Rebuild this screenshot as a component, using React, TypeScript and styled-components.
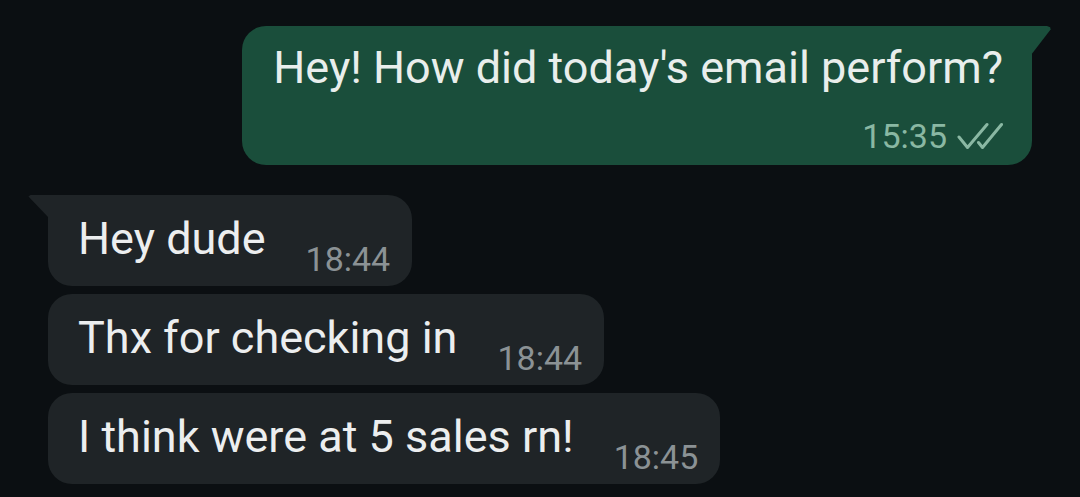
import React from "react";
import styled, { createGlobalStyle } from "styled-components";

const Global = createGlobalStyle`
  html, body {
    margin: 0;
    padding: 0;
    background: #0b0f12;
  }
  body {
    font-family: Roboto, "Noto Sans", "Liberation Sans", sans-serif;
    -webkit-font-smoothing: antialiased;
  }
`;

const Chat = styled.div`
  display: flex;
  flex-direction: column;
  padding: 26px 48px 0 48px;
  min-height: 497px;
  box-sizing: border-box;
  background: #0b0f12;
`;

const OutRow = styled.div`
  display: flex;
  justify-content: flex-end;
  margin-bottom: 30px;
`;

const OutBubble = styled.div`
  position: relative;
  background: #1a4e3b;
  border-radius: 24px 0 24px 24px;
  padding: 16px 29px 10px 31px;
  display: flex;
  flex-direction: column;
`;

const OutTail = styled.span`
  position: absolute;
  top: 0;
  right: -19px;
  width: 20px;
  height: 29px;
  background: #1a4e3b;
  clip-path: polygon(0 0, 80% 0, 96% 4%, 98% 12%, 0 100%);
`;

const Text = styled.span`
  color: #e9eeec;
  font-size: 45px;
  line-height: 52px;
  white-space: nowrap;
`;

const Meta = styled.div<{ $out?: boolean }>`
  display: flex;
  align-items: center;
  justify-content: flex-end;
  gap: 10px;
  font-size: 34px;
  line-height: 38px;
  color: ${(p) => (p.$out ? "#8ab8a3" : "#8b9295")};
  white-space: nowrap;
`;

const OutMeta = styled(Meta)`
  margin-top: 23px;
`;

const InList = styled.div`
  display: flex;
  flex-direction: column;
  align-items: flex-start;
  gap: 8px;
`;

const InBubble = styled.div<{ $first?: boolean }>`
  position: relative;
  background: #1f2427;
  border-radius: ${(p) => (p.$first ? "0 24px 24px 24px" : "24px")};
  padding: 18px 22px 8px 30px;
  display: flex;
  align-items: flex-end;
  gap: 40px;
`;

const InTail = styled.span`
  position: absolute;
  top: 0;
  left: -20px;
  width: 21px;
  height: 23px;
  background: #1f2427;
  clip-path: polygon(100% 0, 12% 0, 2% 6%, 100% 100%);
`;

const InText = styled(Text)`
  color: #eceeef;
  margin-bottom: 13px;
`;

const Ticks = () => (
  <svg width="46" height="28" viewBox="0 0 46 28" fill="none">
    <path
      d="M2 15 L10.5 25.5 L30 2.5"
      stroke="#8ab8a3"
      strokeWidth="3"
      strokeLinecap="round"
      strokeLinejoin="round"
    />
    <path
      d="M21.5 20.5 L25.5 25.5 L44.5 2.5"
      stroke="#8ab8a3"
      strokeWidth="3"
      strokeLinecap="round"
      strokeLinejoin="round"
    />
  </svg>
);

const incoming = [
  { text: "Hey dude", time: "18:44" },
  { text: "Thx for checking in", time: "18:44" },
  { text: "I think were at 5 sales rn!", time: "18:45" },
];

export default function App() {
  return (
    <>
      <Global />
      <Chat>
        <OutRow>
          <OutBubble>
            <OutTail />
            <Text>Hey! How did today's email perform?</Text>
            <OutMeta $out>
              <span>15:35</span>
              <Ticks />
            </OutMeta>
          </OutBubble>
        </OutRow>
        <InList>
          {incoming.map((m, i) => (
            <InBubble key={i} $first={i === 0}>
              {i === 0 && <InTail />}
              <InText>{m.text}</InText>
              <Meta>{m.time}</Meta>
            </InBubble>
          ))}
        </InList>
      </Chat>
    </>
  );
}
